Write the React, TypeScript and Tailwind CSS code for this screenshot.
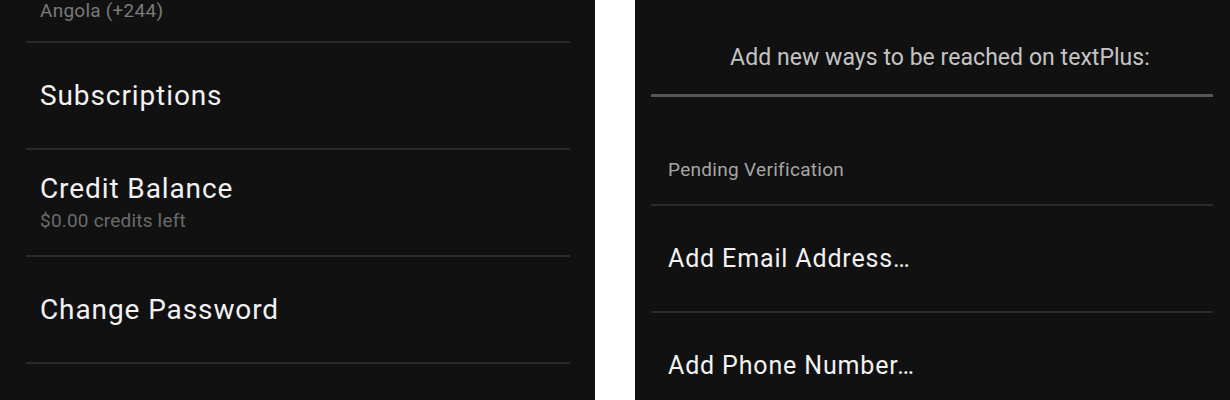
const font = { fontFamily: "Roboto, 'Noto Sans', sans-serif" };

function SettingRow({ title, subtitle }: { title: string; subtitle?: string }) {
  return (
    <div className="flex h-[107px] flex-col justify-center border-b-2 border-[#2a2a2a] pl-[14px]">
      <p className="text-[28px] leading-none tracking-[0.9px] text-[#f2f2f2]">{title}</p>
      {subtitle && <p className="mt-[8px] text-[19px] leading-none tracking-[0.2px] text-[#6b6b6b]">{subtitle}</p>}
    </div>
  );
}

function OptionRow({ title }: { title: string }) {
  return (
    <div className="flex h-[107px] items-center border-b-2 border-[#2a2a2a] pl-[17px]">
      <p className="text-[25px] leading-none tracking-[0.85px] text-[#f2f2f2]">{title}</p>
    </div>
  );
}

export default function App() {
  return (
    <div className="flex h-[400px] w-[1230px] overflow-hidden bg-white" style={font}>
      {/* account settings */}
      <div className="w-[595px] overflow-hidden bg-[#111111] pl-[26px] pr-[25px]">
        <div className="flex h-[43px] items-start border-b-2 border-[#2a2a2a] pl-[14px] pt-[1px]">
          <p className="text-[19px] leading-none tracking-[0.25px] text-[#7a7a7a]">Angola (+244)</p>
        </div>
        <SettingRow title="Subscriptions" />
        <SettingRow title="Credit Balance" subtitle="$0.00 credits left" />
        <SettingRow title="Change Password" />
      </div>

      <div className="w-[40px]" />

      {/* reachability */}
      <div className="w-[595px] overflow-hidden bg-[#111111] pl-[16px] pr-[17px]">
        <div className="flex h-[94px] items-center justify-center pl-[16px] pt-[20px]">
          <p className="text-[23px] leading-none tracking-[0.05px] text-[#c4c4c4]">Add new ways to be reached on textPlus:</p>
        </div>
        <div className="h-[3px] bg-[#555555]" />
        <div className="flex h-[109px] items-end border-b-2 border-[#2a2a2a] pb-[25px] pl-[17px]">
          <p className="text-[19px] leading-none tracking-[0.3px] text-[#a6a6a6]">Pending Verification</p>
        </div>
        <OptionRow title="Add Email Address…" />
        <OptionRow title="Add Phone Number…" />
      </div>
    </div>
  );
}
